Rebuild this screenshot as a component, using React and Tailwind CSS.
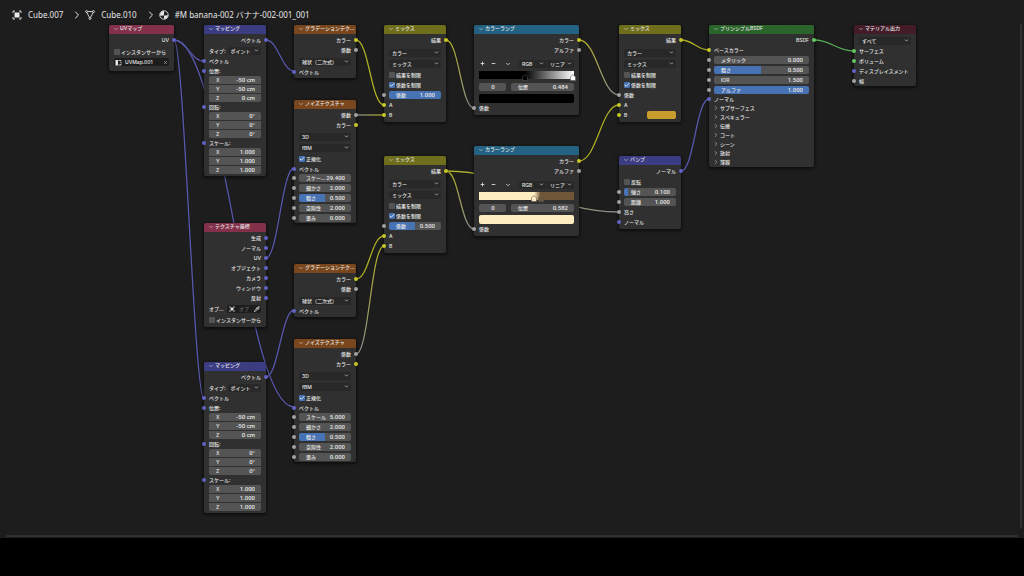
import React, { useState } from 'react';
import { Check, ChevronDown, ChevronRight, Minus, Pipette, Plus, X } from 'lucide-react';

const VECTOR = '#6363c7';
const COLOR = '#c7c729';
const VALUE = '#a1a1a1';
const SHADER = '#63c763';

const socketColors = {
  vector: 'bg-[#6363c7]',
  color: 'bg-[#c7c729]',
  value: 'bg-[#a1a1a1]',
  shader: 'bg-[#63c763]',
};

// x1, y1, x2, y2, handle length, start colour, end colour
const links = [
  [174, 40, 204, 61, 14, VECTOR, VECTOR],
  [174, 40, 204, 399, 10, VECTOR, VECTOR],
  [174, 40, 294, 407, 50, VECTOR, VECTOR],
  [266, 40, 294, 71, 12, VECTOR, VECTOR],
  [266, 258, 294, 168, 12, VECTOR, VECTOR],
  [266, 377, 294, 310, 12, VECTOR, VECTOR],
  [356, 40, 384, 105, 13, COLOR, COLOR],
  [356, 115, 384, 115, 10, VALUE, COLOR],
  [356, 279, 384, 236, 13, COLOR, COLOR],
  [356, 354, 384, 246, 13, VALUE, COLOR],
  [446, 40, 474, 108, 13, COLOR, VALUE],
  [446, 171, 474, 229, 13, COLOR, VALUE],
  [446, 171, 619, 212, 70, COLOR, VALUE],
  [579, 40, 619, 95, 18, COLOR, VALUE],
  [579, 161, 619, 105, 18, COLOR, COLOR],
  [681, 40, 709, 50, 12, COLOR, COLOR],
  [681, 171, 709, 99, 13, VECTOR, VECTOR],
  [814, 40, 854, 51, 18, SHADER, SHADER],
];

const Links = () => (
  <svg className="absolute left-0 top-0 w-[1024px] h-[538px]" fill="none" aria-hidden="true">
    <defs>
      {links.map(([x1, y1, x2, y2, , from, to], i) => (
        <linearGradient key={i} id={`link-${i}`} gradientUnits="userSpaceOnUse" x1={x1} y1={y1} x2={x2} y2={y2}>
          <stop offset="0" stopColor={from} />
          <stop offset="1" stopColor={to} />
        </linearGradient>
      ))}
    </defs>
    {links.map(([x1, y1, x2, y2, h], i) => {
      const d = `M${x1} ${y1}C${x1 + h} ${y1} ${x2 - h} ${y2} ${x2} ${y2}`;
      return (
        <g key={i}>
          <path d={d} stroke="#161616" strokeWidth="2.4" opacity="0.6" />
          <path d={d} stroke={`url(#link-${i})`} strokeWidth="1.3" opacity="0.85" />
        </g>
      );
    })}
  </svg>
);

const Socket = ({ type, side = 'left' }) => (
  <span
    className={`absolute top-1/2 -translate-y-1/2 size-1 rounded-full ${side === 'left' ? '-left-[2px]' : '-right-[2px]'} ${socketColors[type]}`}
  />
);

const Node = ({ title, place, header, children }) => (
  <section className={`absolute ${place} rounded-[2px] bg-[#303030] shadow-[0_1px_3px_1px_rgba(0,0,0,0.5)]`}>
    <h2 className={`flex items-start gap-px h-[9px] pl-1 rounded-t-[2px] mb-px ${header}`}>
      <ChevronDown className="size-[6px] mt-px shrink-0" />
      <span className="leading-[7px]">{title}</span>
    </h2>
    {children}
  </section>
);

const Row = ({ input, output, height = 'h-[10px]', children }) => (
  <div className={`relative flex items-center px-[5px] ${height}`}>
    {input && <Socket type={input} />}
    {children}
    {output && <Socket type={output} side="right" />}
  </div>
);

const Output = ({ type, label }) => (
  <Row output={type}>
    <span className="ml-auto">{label}</span>
  </Row>
);

const Input = ({ type, label, height }) => (
  <Row input={type} height={height}>
    <span>{label}</span>
  </Row>
);

const NumberField = ({ label, name, value, fill = 0, shape = 'rounded-[2px]' }) => {
  const [text, setText] = useState(value);
  return (
    <label
      className={`flex flex-1 min-w-0 items-center h-2 pl-[7px] pr-[6px] bg-[#545454] ${shape}`}
      style={fill ? { backgroundImage: `linear-gradient(90deg, #4772b3 ${fill}%, transparent ${fill}%)` } : undefined}
    >
      {label && <span className="shrink-0">{label}</span>}
      <input
        aria-label={name || label}
        value={text}
        onChange={(e) => setText(e.target.value)}
        className={`flex-1 w-0 h-2 bg-transparent font-[Roboto] text-[6px] outline-none ${label ? 'text-right' : 'text-center'}`}
      />
    </label>
  );
};

const Field = ({ type = 'value', ...field }) => (
  <Row input={type}>
    <NumberField {...field} />
  </Row>
);

const VectorField = ({ type = 'vector', label, values }) => (
  <>
    <Input type={type} label={label} />
    <div className="flex flex-col gap-px h-[26px] mx-[5px] rounded-[2px] overflow-hidden">
      {['X', 'Y', 'Z'].map((axis, i) => (
        <NumberField key={axis} label={axis} name={`${label} ${axis}`} value={values[i]} shape="" />
      ))}
    </div>
  </>
);

const Select = ({ label, value, width = 'flex-1' }) => (
  <span className={`relative flex items-center min-w-0 h-2 rounded-[2px] bg-[#282828] ${width}`}>
    <select aria-label={label} className="appearance-none w-full h-2 pl-[3px] bg-transparent leading-[8px] outline-none">
      <option>{value}</option>
    </select>
    <ChevronDown className="absolute right-[2px] size-[5px] pointer-events-none" strokeWidth={3} />
  </span>
);

const SelectRow = ({ label, value }) => (
  <Row height="h-[11px]">
    <Select label={label} value={value} />
  </Row>
);

const CheckRow = ({ label, checked = false, height = 'h-[11px]' }) => (
  <Row height={height}>
    <label className="flex items-center gap-px">
      <span className="relative flex size-[6px]">
        <input
          type="checkbox"
          defaultChecked={checked}
          className="peer appearance-none size-[6px] rounded-[1px] bg-[#545454] checked:bg-[#4772b3]"
        />
        <Check className="absolute inset-0 size-[6px] hidden peer-checked:block pointer-events-none" strokeWidth={4} />
      </span>
      {label}
    </label>
  </Row>
);

const Mapping = ({ place }) => (
  <Node title="マッピング" place={place} header="bg-[#3c3c83]">
    <Output type="vector" label="ベクトル" />
    <div className="flex items-center gap-[2px] h-[11px] px-[5px]">
      <span className="shrink-0">タイプ:</span>
      <Select label="タイプ" value="ポイント" />
    </div>
    <Input type="vector" label="ベクトル" />
    <VectorField label="位置:" values={['-50 cm', '-50 cm', '0 cm']} />
    <VectorField label="回転:" values={['0°', '0°', '0°']} />
    <VectorField label="スケール:" values={['1.000', '1.000', '1.000']} />
    <div className="h-[2px]" />
  </Node>
);

const Gradient = ({ place }) => (
  <Node title="グラデーションテク..." place={place} header="bg-[#79461d]">
    <Output type="color" label="カラー" />
    <Output type="value" label="係数" />
    <div className="pt-px pb-[2px]">
      <SelectRow label="グラデーションタイプ" value="球状（二次式）" />
      <Input type="vector" label="ベクトル" height="h-[9px]" />
    </div>
  </Node>
);

const Noise = ({ place, scaleLabel, scale }) => (
  <Node title="ノイズテクスチャ" place={place} header="bg-[#79461d]">
    <Output type="value" label="係数" />
    <Output type="color" label="カラー" />
    <div className="pt-px">
      <SelectRow label="次元" value="3D" />
      <SelectRow label="タイプ" value="fBM" />
      <CheckRow label="正規化" checked />
      <Input type="vector" label="ベクトル" height="h-[9px]" />
      <Field label={scaleLabel} name="スケール" value={scale} />
      <Field label="細かさ" value="2.000" />
      <Field label="粗さ" value="0.500" fill={50} />
      <Field label="空隙性" value="2.000" />
      <Field label="歪み" value="0.000" />
    </div>
  </Node>
);

const Mix = ({ place, children }) => (
  <Node title="ミックス" place={place} header="bg-[#6e6e1d]">
    <Output type="color" label="結果" />
    <div className="py-[2px]">
      <SelectRow label="データタイプ" value="カラー" />
      <SelectRow label="ブレンドモード" value="ミックス" />
      <CheckRow label="結果を制限" />
      <CheckRow label="係数を制限" checked height="h-[10px]" />
      {children}
    </div>
  </Node>
);

const rampHandles = {
  black: 'left-[48%] text-black',
  white: 'left-[99%] text-white',
  cream: 'left-[58%] text-[#ffedc2]',
  brown: 'left-[65%] text-[#6f5737]',
};

const Ramp = ({ place, gradient, handles, position, color }) => (
  <Node title="カラーランプ" place={place} header="bg-[#246283]">
    <Output type="color" label="カラー" />
    <Output type="value" label="アルファ" />
    <div className="flex items-center h-[11px] mt-[3px] mb-[2px] px-[5px]">
      <button aria-label="追加" className="px-px"><Plus className="size-[5px]" strokeWidth={4} /></button>
      <button aria-label="削除" className="ml-1 px-px"><Minus className="size-[5px]" strokeWidth={4} /></button>
      <button aria-label="ツール" className="ml-2"><ChevronDown className="size-[6px]" strokeWidth={3} /></button>
      <span className="flex gap-px ml-auto">
        <Select label="カラーモード" value="RGB" width="w-[27px]" />
        <Select label="補間" value="リニア" width="w-[27px]" />
      </span>
    </div>
    <div className={`relative h-2 mx-[5px] ${gradient}`}>
      {handles.map((h) => (
        <svg key={h} viewBox="0 0 6 7" className={`absolute top-[3px] -ml-[3px] w-[6px] h-[7px] ${rampHandles[h]}`}>
          <path d="M3 0.5L5.5 3V6.5H0.5V3Z" fill="currentColor" stroke="#555" strokeWidth="0.6" />
        </svg>
      ))}
    </div>
    <div className="flex gap-[5px] h-2 mt-1 mb-[3px] mx-[5px]">
      <div className="flex w-[27px]">
        <NumberField name="カラーストップ" value="0" />
      </div>
      <NumberField label="位置" value={position} />
    </div>
    <div className="flex mx-[5px]">
      <button aria-label="ストップの色" className={`flex-1 h-[9px] rounded-[2px] ${color}`} />
    </div>
    <Input type="value" label="係数" />
    <div className="h-[2px]" />
  </Node>
);

const Crumb = ({ icon, label, last }) => (
  <li className="flex items-center">
    {icon}
    <a href="#" className="ml-[6px]">{label}</a>
    {!last && <ChevronRight className="size-3 ml-2 mr-[2px] -my-px" />}
  </li>
);

const ObjectIcon = ({ className }) => (
  <svg viewBox="0 0 10 10" className={className} fill="none" stroke="currentColor">
    <path d="M1 3V1H3M7 1H9V3M9 7V9H7M3 9H1V7" strokeWidth="0.9" />
    <rect x="2.5" y="2.5" width="5" height="5" fill="currentColor" stroke="none" />
  </svg>
);

const MeshIcon = () => (
  <svg viewBox="0 0 10 10" className="size-[10px]" fill="none" stroke="currentColor" strokeWidth="0.9">
    <path d="M2.6 1.6H7.4M2 2.8L4.4 7.4M8 2.8L5.6 7.4" />
    <circle cx="1.6" cy="1.6" r="1" />
    <circle cx="8.4" cy="1.6" r="1" />
    <circle cx="5" cy="8.4" r="1" />
  </svg>
);

const MaterialIcon = () => (
  <svg viewBox="0 0 10 10" className="size-[10px]">
    <circle cx="5" cy="5" r="4.2" fill="none" stroke="currentColor" strokeWidth="0.9" />
    <path d="M5 1A4 4 0 0 0 1.1 5.4Q3 6 5 5.2ZM5 5.2Q7 5.8 8.9 5A4 4 0 0 1 5 9Z" fill="currentColor" />
  </svg>
);

const panels = ['サブサーフェス', 'スペキュラー', '伝播', 'コート', 'シーン', '放射', '薄膜'];

export default function App() {
  return (
    <div className="flex flex-col h-screen pb-[38px] bg-black text-[#e6e6e6] font-[Inter,'Noto_Sans_CJK_JP',sans-serif]">
      <main className="relative flex-1 overflow-hidden bg-[#1d1d1d] bg-[radial-gradient(circle,#212121_1px,transparent_1px)] bg-size-[44px_44px] bg-position-[15px_2px] text-[5px] leading-[8px] font-medium whitespace-nowrap">
        <Links />
        <nav className="relative pt-[10px] pl-3 text-[8px] leading-[10px] font-normal font-['Noto_Sans','Noto_Sans_CJK_JP',sans-serif]">
          <ol className="flex">
            <Crumb icon={<ObjectIcon className="size-[10px]" />} label="Cube.007" />
            <Crumb icon={<MeshIcon />} label="Cube.010" />
            <Crumb icon={<MaterialIcon />} label="#M banana-002 バナナ-002-001_001" last />
          </ol>
        </nav>

        <Node title="UVマップ" place="left-[109px] top-[25px] w-[65px]" header="bg-[#83314a]">
          <Output type="vector" label="UV" />
          <div className="pt-px pb-1">
            <CheckRow label="インスタンサーから" />
            <Row>
              <span className="flex flex-1 items-center h-2 px-px rounded-[2px] bg-[#1d1d1d]">
                <svg viewBox="0 0 7 7" className="size-[7px]" fill="currentColor">
                  <path d="M0.5 1H3V6.5H0.5Z" />
                  <path d="M3.5 1.5H6V2.5M6 5V6H3.5M6 3V4.5" fill="none" stroke="currentColor" strokeWidth="0.8" />
                </svg>
                <input aria-label="UVマップ" defaultValue="UVMap.001" className="flex-1 w-0 h-2 pl-[3px] bg-transparent outline-none" />
                <button aria-label="クリア"><X className="size-[5px]" /></button>
              </span>
            </Row>
          </div>
        </Node>

        <Mapping place="left-[204px] top-[25px] w-[62px]" />

        <Node title="テクスチャ座標" place="left-[204px] top-[223px] w-[62px]" header="bg-[#83314a]">
          {['生成', 'ノーマル', 'UV', 'オブジェクト', 'カメラ', 'ウィンドウ', '反射'].map((label) => (
            <Output key={label} type="vector" label={label} />
          ))}
          <div className="pt-px pb-[2px]">
            <Row>
              <label htmlFor="object" className="w-[18px]">オブ...</label>
              <span className="flex flex-1 items-center h-2 px-px rounded-[2px] bg-[#1d1d1d]">
                <ObjectIcon className="size-[6px] ml-px" />
                <input id="object" placeholder="オブ" className="flex-1 w-0 h-2 pl-1 bg-transparent outline-none placeholder:text-[#666]" />
                <button aria-label="スポイト"><Pipette className="size-[6px]" strokeWidth={3} /></button>
              </span>
            </Row>
            <CheckRow label="インスタンサーから" />
          </div>
        </Node>

        <Mapping place="left-[204px] top-[362px] w-[62px]" />

        <Gradient place="left-[294px] top-[25px] w-[62px]" />
        <Noise place="left-[294px] top-[100px] w-[62px]" scaleLabel="スケー..." scale="29.400" />
        <Gradient place="left-[294px] top-[264px] w-[62px]" />
        <Noise place="left-[294px] top-[339px] w-[62px]" scaleLabel="スケール" scale="5.000" />

        <Mix place="left-[384px] top-[25px] w-[62px]">
          <Field label="係数" value="1.000" fill={100} />
          <Input type="color" label="A" />
          <Input type="color" label="B" />
        </Mix>
        <Mix place="left-[384px] top-[156px] w-[62px]">
          <Field label="係数" value="0.500" fill={50} />
          <Input type="color" label="A" />
          <Input type="color" label="B" />
        </Mix>

        <Ramp
          place="left-[474px] top-[25px] w-[105px]"
          gradient="bg-[linear-gradient(90deg,#000_48%,#fff)]"
          handles={['black', 'white']}
          position="0.484"
          color="bg-black"
        />
        <Ramp
          place="left-[474px] top-[146px] w-[105px]"
          gradient="bg-[linear-gradient(90deg,#ffedc2_58%,#6f5737_65%)]"
          handles={['cream', 'brown']}
          position="0.582"
          color="bg-[#ffedc2]"
        />

        <Mix place="left-[619px] top-[25px] w-[62px]">
          <Input type="value" label="係数" />
          <Input type="color" label="A" />
          <Row input="color">
            <span>B</span>
            <button aria-label="B の色" className="ml-auto w-[29px] h-2 rounded-[2px] bg-[#c99c2e]" />
          </Row>
        </Mix>

        <Node title="バンプ" place="left-[619px] top-[156px] w-[62px]" header="bg-[#3c3c83]">
          <Output type="vector" label="ノーマル" />
          <div className="pt-px pb-[2px]">
            <CheckRow label="反転" height="h-[10px]" />
            <Field label="強さ" value="0.100" fill={8} />
            <Field label="距離" value="1.000" />
            <Input type="value" label="高さ" />
            <Input type="vector" label="ノーマル" />
          </div>
        </Node>

        <Node title="プリンシプルBSDF" place="left-[709px] top-[25px] w-[105px]" header="bg-[#2b652b]">
          <Output type="shader" label="BSDF" />
          <Input type="color" label="ベースカラー" />
          <Field label="メタリック" value="0.000" />
          <Field label="粗さ" value="0.500" fill={50} />
          <Field label="IOR" value="1.500" />
          <Field label="アルファ" value="1.000" fill={100} />
          <Input type="vector" label="ノーマル" height="h-2" />
          <ul className="pb-px">
            {panels.map((panel) => (
              <li key={panel}>
                <button className="flex items-center gap-px h-[9px] px-1">
                  <ChevronRight className="size-[6px]" />
                  {panel}
                </button>
              </li>
            ))}
          </ul>
        </Node>

        <Node title="マテリアル出力" place="left-[854px] top-[25px] w-[62px]" header="bg-[#431c28]">
          <SelectRow label="ターゲット" value="すべて" />
          <Input type="shader" label="サーフェス" />
          <Input type="shader" label="ボリューム" />
          <Input type="vector" label="ディスプレイスメント" />
          <Input type="value" label="幅" />
        </Node>

        {/* Scrollbars */}
        <div className="absolute left-[6px] right-[6px] bottom-px h-[2px] rounded-full bg-[#303030]" />
        <div className="absolute right-[2px] top-6 bottom-[10px] w-[2px] rounded-full bg-[#303030]" />
      </main>
    </div>
  );
}
